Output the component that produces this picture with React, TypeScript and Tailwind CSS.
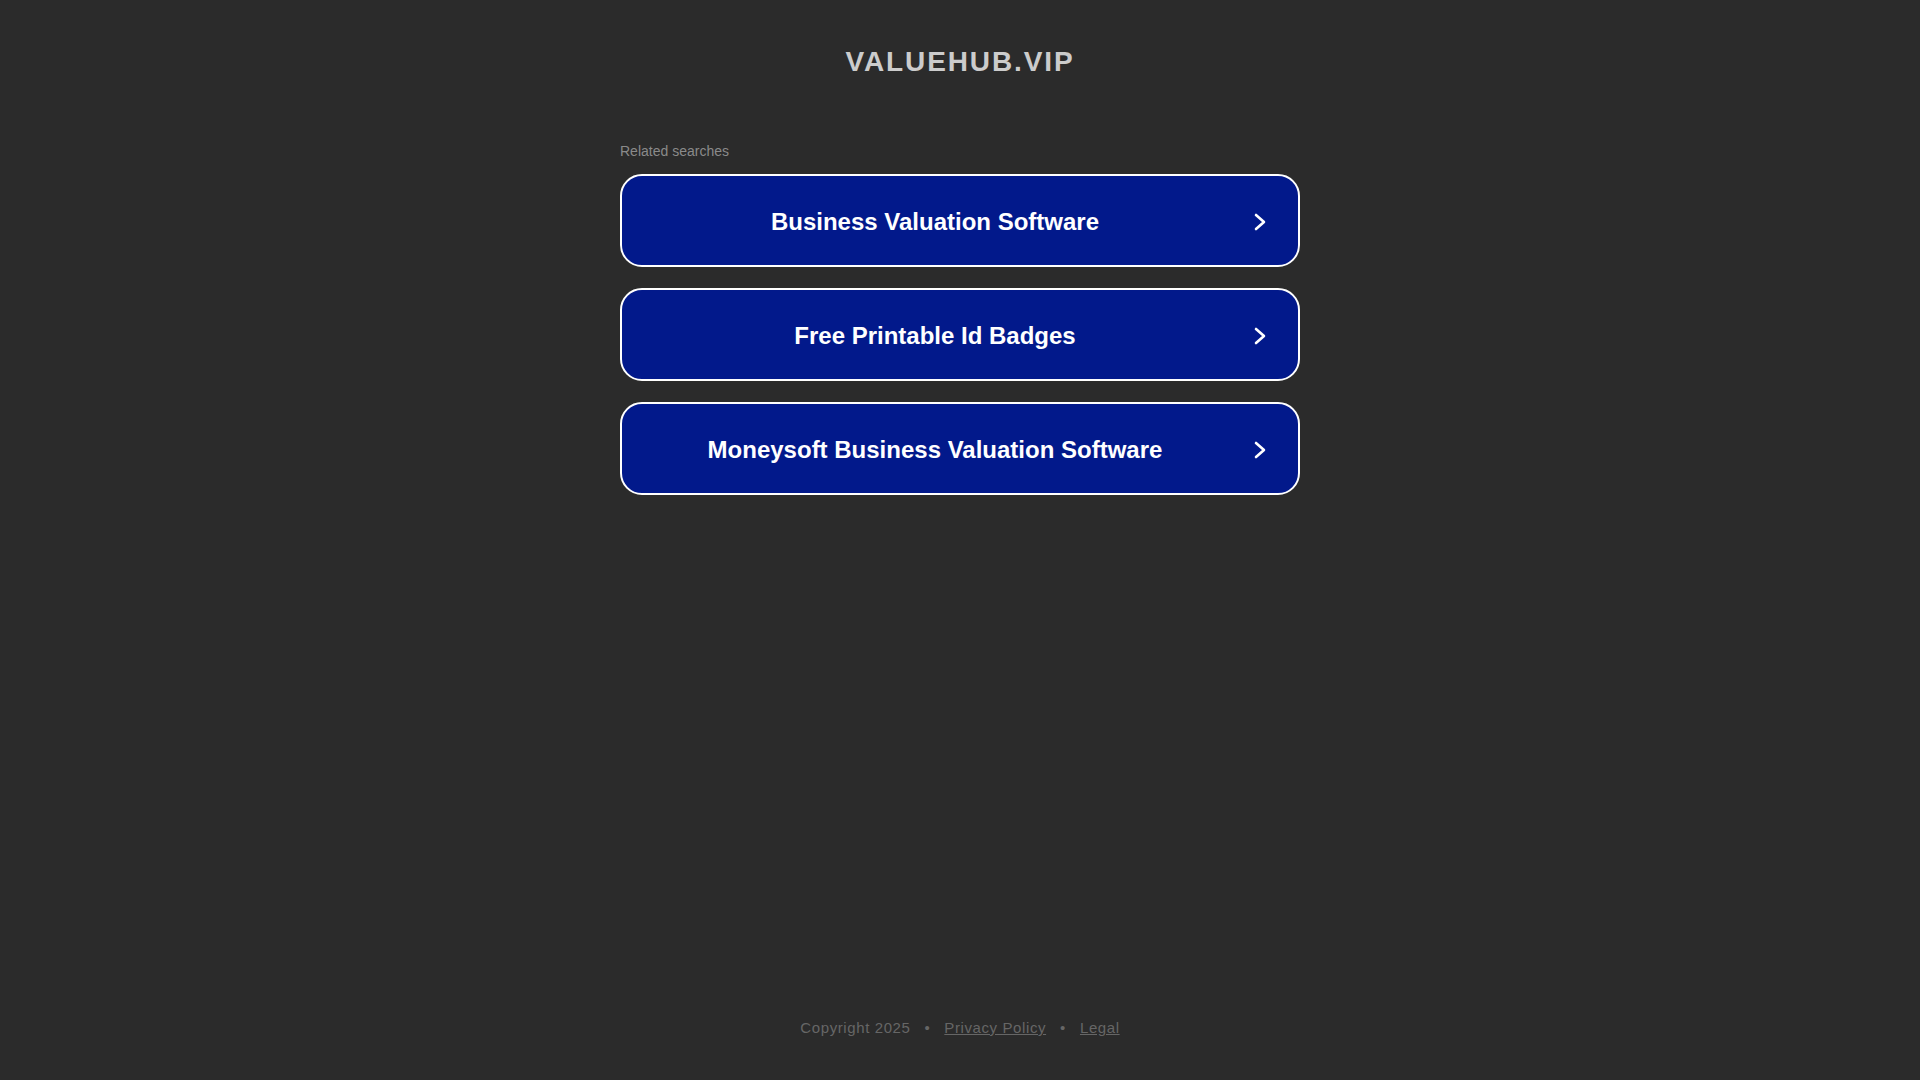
import React from "react";

// Enlaces de búsquedas relacionadas
const searches: string[] = [
  "Business Valuation Software",
  "Free Printable Id Badges",
  "Moneysoft Business Valuation Software",
];

const Chevron: React.FC = () => (
  <svg width="12" height="18" viewBox="0 0 12 18" fill="none" className="mt-[2px] shrink-0">
    <polyline
      points="2,2 10,9 2,16"
      stroke="#ffffff"
      strokeWidth="2.6"
      strokeLinecap="round"
      strokeLinejoin="round"
    />
  </svg>
);

const SearchButton: React.FC<{ label: string }> = ({ label }) => (
  <a
    href="#"
    className="flex h-[93px] items-center rounded-[22px] border-2 border-white bg-[#02198b] pr-[32px] text-white no-underline"
  >
    <span className="mr-[6px] flex-1 pt-[2px] text-center text-[24px] font-bold leading-[28px]">{label}</span>
    <Chevron />
  </a>
);

export default function App() {
  return (
    <div className="flex h-[1080px] flex-col bg-[#2b2b2b] font-['Liberation_Sans',Arial,sans-serif]">
      <h1 className="pt-[46px] text-center text-[28px] font-bold leading-[32px] tracking-[1.9px] text-[#cccccc]">
        VALUEHUB.VIP
      </h1>

      <div className="mx-auto mt-[64px] w-[680px]">
        <div className="text-[14px] leading-[18px] text-[#8a8a8a]">Related searches</div>
        <div className="mt-[14px] flex flex-col gap-[21px]">
          {searches.map((s) => (
            <SearchButton key={s} label={s} />
          ))}
        </div>
      </div>

      <div className="mt-auto pb-[43px] text-center text-[15px] leading-[18px] tracking-[0.6px] text-[#666666]">
        <span>Copyright 2025</span>
        <span className="mx-[14px]">•</span>
        <a href="#" className="text-[#666666] underline">Privacy Policy</a>
        <span className="mx-[14px]">•</span>
        <a href="#" className="text-[#666666] underline">Legal</a>
      </div>
    </div>
  );
}
